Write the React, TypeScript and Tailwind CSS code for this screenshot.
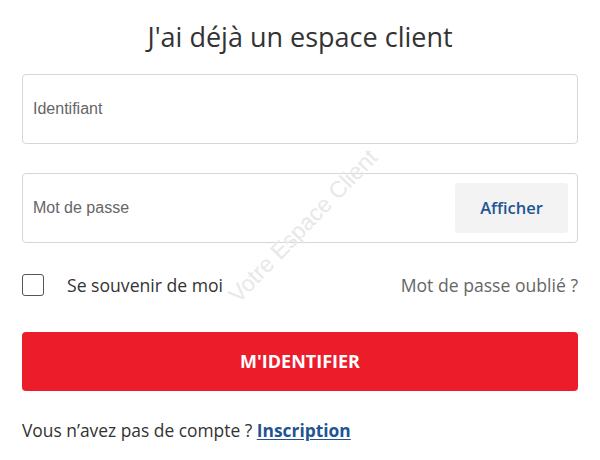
import React, { useState } from 'react';

export default function App() {
  const [login, setLogin] = useState('');
  const [password, setPassword] = useState('');
  const [showPassword, setShowPassword] = useState(false);
  const [remember, setRemember] = useState(false);

  return (
    <div className="relative w-[600px] h-[460px] bg-white overflow-hidden font-['Open_Sans',sans-serif] text-[#333]">
      <div className="px-[22px] pt-[18px]">
        <h2 className="text-center text-[27px] leading-[38px] text-[#333]">J'ai déjà un espace client</h2>

        <div className="mt-[18px] h-[70px] border border-[#d6d6d6] rounded-[4px] flex items-center px-[10px]">
          <input
            type="text"
            value={login}
            onChange={e => setLogin(e.target.value)}
            placeholder="Identifiant"
            className="w-full bg-transparent font-['Liberation_Sans',sans-serif] text-[16px] text-[#333] placeholder:text-[#666] focus:outline-none"
          />
        </div>

        <div className="mt-[29px] h-[70px] border border-[#d6d6d6] rounded-[4px] flex items-center pl-[10px] pr-[9px]">
          <input
            type={showPassword ? 'text' : 'password'}
            value={password}
            onChange={e => setPassword(e.target.value)}
            placeholder="Mot de passe"
            className="flex-1 bg-transparent font-['Liberation_Sans',sans-serif] text-[16px] text-[#333] placeholder:text-[#666] focus:outline-none"
          />
          <button
            type="button"
            onClick={() => setShowPassword(!showPassword)}
            className="w-[113px] h-[50px] bg-[#f3f3f3] rounded-[3px] text-[#1f5593] text-[16.5px] font-semibold"
          >
            {showPassword ? 'Masquer' : 'Afficher'}
          </button>
        </div>

        <div className="mt-[30px] flex items-center justify-between h-[24px]">
          <label className="flex items-center gap-[23px] cursor-pointer">
            <span
              onClick={() => setRemember(!remember)}
              className="w-[22px] h-[22px] border border-[#555] rounded-[3px] flex items-center justify-center"
            >
              {remember && <span className="text-[14px] leading-none">✓</span>}
            </span>
            <span className="text-[17.6px] text-[#333]">Se souvenir de moi</span>
          </label>
          <a className="text-[17.6px] text-[#666]">Mot de passe oublié ?</a>
        </div>

        <button className="mt-[35px] w-full h-[59px] bg-[#ed1c2b] rounded-[4px] text-white text-[18px] font-bold">
          M'IDENTIFIER
        </button>

        <p className="mt-[26px] text-[17.4px] text-[#333]">
          Vous n’avez pas de compte ? <a className="text-[#1f5593] font-bold underline underline-offset-2">Inscription</a>
        </p>
      </div>

      <div className="absolute left-[303px] top-[226px] -translate-x-1/2 -translate-y-1/2 -rotate-[46deg] whitespace-nowrap font-['Liberation_Sans',sans-serif] text-[23px] text-[#e8e8e8] pointer-events-none select-none">
        Votre Espace Client
      </div>
    </div>
  );
}
